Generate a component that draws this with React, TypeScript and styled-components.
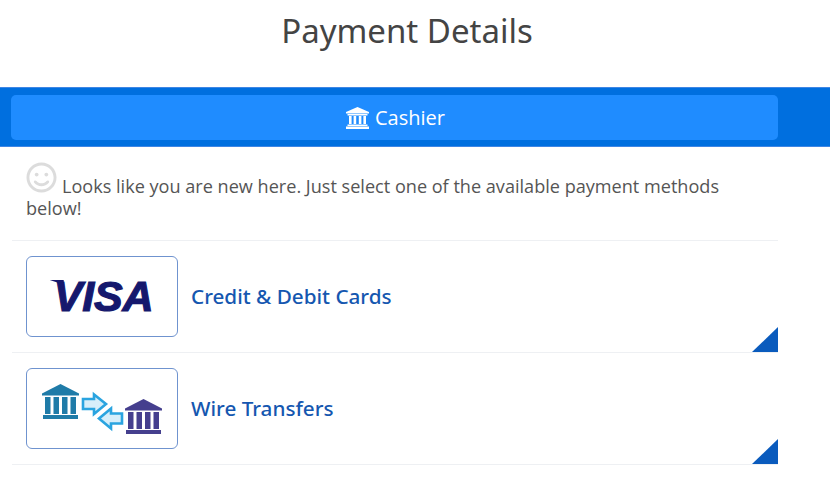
import React from "react";
import styled, { createGlobalStyle } from "styled-components";
import { FaRegSmile } from "react-icons/fa";

const GlobalStyle = createGlobalStyle`
  html, body {
    margin: 0;
    padding: 0;
    background: #fff;
    font-family: "Open Sans", "Liberation Sans", sans-serif;
  }
`;

const Page = styled.div`
  width: 830px;
  height: 482px;
  overflow: hidden;
`;

const Title = styled.h1`
  margin: 0;
  height: 87px;
  padding: 11px 16px 0 0;
  box-sizing: border-box;
  text-align: center;
  font-family: "Noto Sans", "Open Sans", sans-serif;
  font-size: 33px;
  line-height: 40px;
  font-weight: 400;
  color: #444;
`;

const Band = styled.div`
  height: 60px;
  box-sizing: border-box;
  padding: 7px 52px 6px 11px;
  background: #006fdf;
  border-top: 1px solid #3f86e4;
  border-bottom: 1px solid #3f86e4;
`;

const CashierButton = styled.div`
  height: 45px;
  display: flex;
  align-items: center;
  justify-content: center;
  gap: 6px;
  padding-left: 2px;
  background: #1f8cff;
  border-radius: 5px;
  color: #fff;
  font-size: 20px;
`;

const Content = styled.div`
  width: 766px;
  margin-left: 12px;
`;

const Message = styled.p`
  margin: 0;
  height: 93px;
  box-sizing: border-box;
  padding: 15px 14px 0;
  font-size: 18.1px;
  line-height: 22px;
  color: #555;
`;

const Smiley = styled(FaRegSmile)`
  width: 31px;
  height: 31px;
  margin-right: 5px;
  color: #dcdcdc;
  vertical-align: 0;
`;

const MethodRow = styled.div`
  position: relative;
  height: 112px;
  box-sizing: border-box;
  display: flex;
  align-items: center;
  gap: 13px;
  padding: 0 14px 1px;
  border-top: 1px solid #eef0f3;
  &:last-child {
    border-bottom: 1px solid #eef0f3;
    height: 113px;
  }
`;

const LogoBox = styled.div`
  width: 152px;
  height: 81px;
  box-sizing: border-box;
  display: flex;
  align-items: center;
  justify-content: center;
  border: 1px solid #6f93cf;
  border-radius: 6px;
  background: #fff;
`;

const VisaMark = styled.span`
  position: relative;
  padding-left: 3px;
  font-family: "Liberation Sans", Arial, sans-serif;
  font-size: 43px;
  line-height: 48px;
  font-weight: 700;
  font-style: italic;
  letter-spacing: -0.2px;
  color: #15186d;
  -webkit-text-stroke: 1.2px #15186d;
  &::before {
    content: "";
    position: absolute;
    left: -1px;
    top: 8px;
    width: 14px;
    height: 9px;
    background: #15186d;
    clip-path: polygon(0 0, 100% 0, 100% 100%, 60% 30%);
  }
`;

const MethodLabel = styled.span`
  font-family: "Noto Sans", "Open Sans", sans-serif;
  font-size: 20.7px;
  font-weight: 500;
  color: #1557b0;
`;

const Corner = styled.div`
  position: absolute;
  right: 0;
  bottom: 0;
  width: 26px;
  height: 25px;
  background: #0a5bbd;
  clip-path: polygon(100% 0, 100% 100%, 0 100%);
`;

const CashierIcon = () => (
  <svg width="23" height="22" viewBox="0 0 23 22" fill="#fff">
    <path d="M11.5 0 L23 5 V6.5 H0 V5 Z" />
    <rect x="1.5" y="7" width="20" height="1.5" />
    <rect x="3" y="9" width="2.6" height="8" />
    <rect x="7.6" y="9" width="2.6" height="8" />
    <rect x="12.8" y="9" width="2.6" height="8" />
    <rect x="17.4" y="9" width="2.6" height="8" />
    <rect x="1.5" y="17.5" width="20" height="1.5" />
    <rect x="0" y="19.5" width="23" height="2.5" />
  </svg>
);

const Bank = ({ x, y, color }: { x: number; y: number; color: string }) => (
  <g transform={`translate(${x} ${y})`} fill={color}>
    <path d="M18.5 0 L37 9.5 V11.5 H0 V9.5 Z" />
    <rect x="3" y="13" width="5.5" height="17" />
    <rect x="11.5" y="13" width="5.5" height="17" />
    <rect x="20" y="13" width="5.5" height="17" />
    <rect x="28.5" y="13" width="5.5" height="17" />
    <rect x="1" y="31" width="35" height="4" />
  </g>
);

const WireLogo = () => (
  <svg width="122" height="51" viewBox="0 -1 122 51">
    <Bank x={1} y={0} color="#1f7ba8" />
    <Bank x={84} y={15} color="#453f8e" />
    <g fill="#d6eefa" stroke="#2aa4e0" strokeWidth="2.6" strokeLinejoin="miter">
      <path d="M42 15 H53 V10.5 L65 20 L53 30 V25 H42 Z" />
      <path d="M81 29.5 H70 V24.5 L58 34.5 L70 44.5 V39.5 H81 Z" />
    </g>
  </svg>
);

export default function App() {
  return (
    <Page>
      <GlobalStyle />
      <Title>Payment Details</Title>
      <Band>
        <CashierButton>
          <CashierIcon />
          Cashier
        </CashierButton>
      </Band>
      <Content>
        <Message>
          <Smiley />
          Looks like you are new here. Just select one of the available payment methods below!
        </Message>
        <MethodRow>
          <LogoBox>
            <VisaMark>VISA</VisaMark>
          </LogoBox>
          <MethodLabel>Credit &amp; Debit Cards</MethodLabel>
          <Corner />
        </MethodRow>
        <MethodRow>
          <LogoBox>
            <WireLogo />
          </LogoBox>
          <MethodLabel>Wire Transfers</MethodLabel>
          <Corner />
        </MethodRow>
      </Content>
    </Page>
  );
}
